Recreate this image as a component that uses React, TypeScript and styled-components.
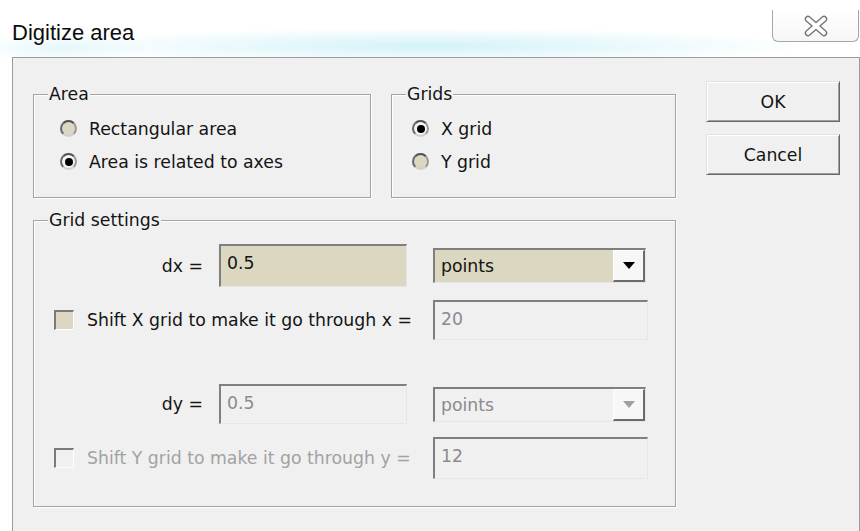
import styled, { createGlobalStyle } from "styled-components";

const TAN = "#dbd7c1";
const FACE = "#f0f0f0";

const GlobalStyle = createGlobalStyle`
  html, body {
    margin: 0;
    padding: 0;
    background: #ffffff;
  }
  body {
    width: 860px;
    height: 531px;
    overflow: hidden;
    font-family: "DejaVu Sans", Verdana, sans-serif;
    font-size: 17.3px;
    color: #141414;
  }
`;

const Window = styled.div`
  width: 860px;
  height: 531px;
  display: flex;
  flex-direction: column;
`;

// caption strip with the faint aero glow under the title
const TitleBar = styled.div`
  height: 57px;
  flex-shrink: 0;
  display: flex;
  align-items: flex-start;
  background:
    radial-gradient(ellipse 380px 18px at 430px 46px, rgba(196, 238, 246, 0.75), rgba(255, 255, 255, 0) 100%),
    radial-gradient(ellipse 90px 16px at 60px 48px, rgba(214, 242, 248, 0.6), rgba(255, 255, 255, 0) 100%),
    #ffffff;
`;

const Title = styled.div`
  font-family: "Liberation Sans", Arial, sans-serif;
  font-size: 22px;
  line-height: 24px;
  color: #0c0c0c;
  padding: 21px 0 0 12px;
`;

const CloseButton = styled.div`
  width: 87px;
  height: 32px;
  margin: 10px 1px 0 auto;
  box-sizing: border-box;
  border: 1px solid #a6a6a6;
  border-top: none;
  border-radius: 0 0 6px 6px;
  background: linear-gradient(#ffffff, #f6f6f6);
  display: flex;
  align-items: center;
  justify-content: center;
`;

const Body = styled.div`
  flex: 1;
  margin-left: 12px;
  border: 1px solid #9c9c9c;
  border-bottom: none;
  background: ${FACE};
  display: grid;
  grid-template-columns: 643px 134px;
  column-gap: 30px;
  align-content: start;
  padding: 23px 0 0 20px;
`;

const LeftColumn = styled.div`
  display: flex;
  flex-direction: column;
  gap: 12px;
  padding-top: 3px;
`;

const TopRow = styled.div`
  display: grid;
  grid-template-columns: 338px 285px;
  column-gap: 20px;
`;

const Group = styled.fieldset`
  margin: 0;
  padding: 0;
  min-width: 0;
  border: 1px solid #a3a3a3;
  box-shadow: inset 1px 1px 0 #ffffff, 1px 1px 0 #ffffff;
`;

const Legend = styled.legend`
  margin-left: 14px;
  padding: 0 1px;
  line-height: 20px;
  background: ${FACE};
  color: #141414;
`;

const RadioList = styled.div<{ $inset: number }>`
  padding: 8px 0 19px ${(p) => p.$inset}px;
`;

const RadioRow = styled.label`
  height: 33px;
  display: flex;
  align-items: center;
  gap: 12px;
`;

const RadioCircle = styled.span<{ $on?: boolean }>`
  width: 17px;
  height: 17px;
  flex-shrink: 0;
  box-sizing: border-box;
  border-radius: 50%;
  border: 2px solid;
  border-color: #4f4f4f #9a9a9a #cfcfcf #6a6a6a;
  background: ${(p) => (p.$on ? "#f6f5ef" : TAN)};
  display: inline-flex;
  align-items: center;
  justify-content: center;
`;

const RadioDot = styled.span`
  width: 8px;
  height: 8px;
  border-radius: 50%;
  background: #000000;
`;

const SettingsBody = styled.div`
  padding: 14px 0 27px 0;
  display: flex;
  flex-direction: column;
`;

const Row = styled.div<{ $h: number; $above?: number }>`
  display: grid;
  grid-template-columns: 185px 214px 214px;
  align-items: center;
  height: ${(p) => p.$h}px;
  margin-top: ${(p) => p.$above ?? 0}px;
`;

const FieldLabel = styled.span`
  text-align: right;
  padding-right: 16px;
`;

const TextBox = styled.div<{ $off?: boolean; $h: number; $w: number }>`
  width: ${(p) => p.$w}px;
  height: ${(p) => p.$h}px;
  box-sizing: border-box;
  border-top: 2px solid #7f7f7f;
  border-left: 2px solid #7f7f7f;
  border-right: 1px solid #e6e6e6;
  border-bottom: 1px solid #e6e6e6;
  background: ${(p) => (p.$off ? FACE : TAN)};
  color: ${(p) => (p.$off ? "#8b8b8f" : "#141414")};
  padding: 7px 6px 0;
  line-height: 20px;
`;

const Combo = styled.div<{ $off?: boolean }>`
  width: 213px;
  height: 35px;
  box-sizing: border-box;
  display: flex;
  border-top: 2px solid #7f7f7f;
  border-left: 2px solid #7f7f7f;
  border-right: 1px solid #e6e6e6;
  border-bottom: 1px solid #e6e6e6;
  background: ${(p) => (p.$off ? FACE : TAN)};
  color: ${(p) => (p.$off ? "#8b8b8f" : "#141414")};
`;

const ComboText = styled.span`
  flex: 1;
  padding-left: 6px;
  display: flex;
  align-items: center;
`;

const ComboButton = styled.span`
  width: 32px;
  box-sizing: border-box;
  border-top: 1px solid #ffffff;
  border-left: 1px solid #ffffff;
  border-right: 2px solid #6b6b6b;
  border-bottom: 2px solid #6b6b6b;
  background: #f7f7f7;
  display: flex;
  align-items: center;
  justify-content: center;
`;

const CheckLine = styled.label<{ $off?: boolean }>`
  grid-column: 1 / 3;
  display: flex;
  align-items: center;
  gap: 13px;
  padding-left: 20px;
  color: ${(p) => (p.$off ? "#a2a2a2" : "#141414")};
  white-space: nowrap;
`;

const CheckBox = styled.span<{ $off?: boolean }>`
  width: 20px;
  height: 20px;
  flex-shrink: 0;
  box-sizing: border-box;
  border-top: 2px solid #7a7a7a;
  border-left: 2px solid #7a7a7a;
  border-right: 1px solid #ffffff;
  border-bottom: 1px solid #ffffff;
  background: ${(p) => (p.$off ? FACE : TAN)};
`;

const ButtonColumn = styled.div`
  display: flex;
  flex-direction: column;
  gap: 12px;
`;

const PushButton = styled.button`
  height: 41px;
  box-sizing: border-box;
  font: inherit;
  color: #141414;
  background: ${FACE};
  border: 1px solid;
  border-color: #e2e2e2 #686868 #686868 #e2e2e2;
  box-shadow: inset 1px 1px 0 #ffffff, inset -1px -1px 0 #a0a0a0;
  padding: 0;
`;

function CloseGlyph() {
  return (
    <svg width="26" height="22" viewBox="0 0 26 22">
      <g strokeLinecap="round">
        <path d="M5 4 L21 18 M21 4 L5 18" stroke="#747474" strokeWidth="6.5" />
        <path d="M5 4 L21 18 M21 4 L5 18" stroke="#ffffff" strokeWidth="3.8" />
      </g>
    </svg>
  );
}

function Arrow({ off }: { off?: boolean }) {
  return (
    <svg width="12" height="7" viewBox="0 0 12 7">
      <path d="M0 0 H12 L6 7 Z" fill={off ? "#a0a0a0" : "#000000"} />
    </svg>
  );
}

function Radio({ on, label }: { on?: boolean; label: string }) {
  return (
    <RadioRow>
      <RadioCircle $on={on}>{on && <RadioDot />}</RadioCircle>
      {label}
    </RadioRow>
  );
}

export default function App() {
  return (
    <Window>
      <GlobalStyle />
      <TitleBar>
        <Title>Digitize area</Title>
        <CloseButton>
          <CloseGlyph />
        </CloseButton>
      </TitleBar>
      <Body>
        <LeftColumn>
          <TopRow>
            <Group>
              <Legend>Area</Legend>
              <RadioList $inset={26}>
                <Radio label="Rectangular area" />
                <Radio on label="Area is related to axes" />
              </RadioList>
            </Group>
            <Group>
              <Legend>Grids</Legend>
              <RadioList $inset={20}>
                <Radio on label="X grid" />
                <Radio label="Y grid" />
              </RadioList>
            </Group>
          </TopRow>
          <Group>
            <Legend>Grid settings</Legend>
            <SettingsBody>
              <Row $h={43}>
                <FieldLabel>dx =</FieldLabel>
                <TextBox $h={43} $w={188}>0.5</TextBox>
                <Combo>
                  <ComboText>points</ComboText>
                  <ComboButton>
                    <Arrow />
                  </ComboButton>
                </Combo>
              </Row>
              <Row $h={40} $above={13}>
                <CheckLine>
                  <CheckBox />
                  Shift X grid to make it go through x =
                </CheckLine>
                <TextBox $off $h={40} $w={215}>20</TextBox>
              </Row>
              <Row $h={40} $above={44}>
                <FieldLabel>dy =</FieldLabel>
                <TextBox $off $h={40} $w={188}>0.5</TextBox>
                <Combo $off>
                  <ComboText>points</ComboText>
                  <ComboButton>
                    <Arrow off />
                  </ComboButton>
                </Combo>
              </Row>
              <Row $h={42} $above={13}>
                <CheckLine $off>
                  <CheckBox $off />
                  Shift Y grid to make it go through y =
                </CheckLine>
                <TextBox $off $h={42} $w={215}>12</TextBox>
              </Row>
            </SettingsBody>
          </Group>
        </LeftColumn>
        <ButtonColumn>
          <PushButton>OK</PushButton>
          <PushButton>Cancel</PushButton>
        </ButtonColumn>
      </Body>
    </Window>
  );
}
